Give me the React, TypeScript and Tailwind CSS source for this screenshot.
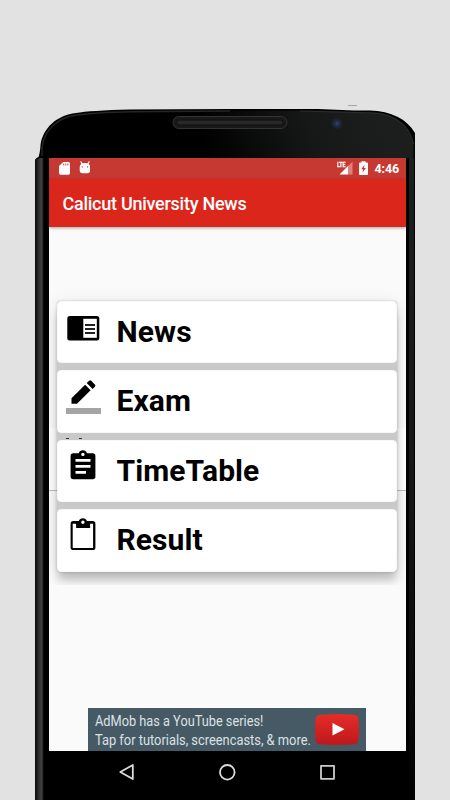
import type { ReactNode } from "react";

interface MenuItem {
    label: string;
    icon: ReactNode;
}

const menuItems: MenuItem[] = [
    {
        label: "News",
        icon: (
            <svg className="h-[62px] w-11" viewBox="0 0 44 62">
                <rect x="10.300" y="15" width="32" height="24.500" rx="2.500" fill="#000" />
                <rect x="26.300" y="17.800" width="13.500" height="19" fill="#fff" />
                <path d="M28 24h10M28 28h10M28 32h10" stroke="#222" strokeWidth="1.800" />
            </svg>
        ),
    },
    {
        label: "Exam",
        icon: (
            <svg className="h-[62px] w-11" viewBox="0 0 44 62">
                <path d="M14.500 33.700v-5.500L28.100 14.700l5.500 5.500L20 33.700Z" />
                <path d="m29.700 13.100 2.200-2.200c.9-.9 1.500-.9 2.300-.1l3.600 3.600c.8.8.8 1.500 0 2.300L35.600 19Z" />
                <path d="M9 38h35v6H9Z" fill="#a5a5a5" />
            </svg>
        ),
    },
    {
        label: "TimeTable",
        icon: (
            <svg className="h-[62px] w-11" viewBox="-0.5 0 44 62">
                <path
                    fillRule="evenodd"
                    d="M15.800 13.200h5.500a4.300 4.300 0 0 1 8.100 0h5.800a2.700 2.700 0 0 1 2.700 2.700v20.700a2.700 2.700 0 0 1-2.700 2.700H15.800a2.700 2.700 0 0 1-2.700-2.700V15.900a2.700 2.700 0 0 1 2.700-2.700Zm9.600-.5a1.700 1.700 0 1 0 0 3.400 1.700 1.700 0 0 0 0-3.400ZM18 19v2.800h15V19Zm0 6v2.800h15V25Zm0 6v2.800h10.500V31Z"
                />
            </svg>
        ),
    },
    {
        label: "Result",
        icon: (
            <svg className="h-[62px] w-11" viewBox="-0.5 -0.3 44 62">
                <path
                    fillRule="evenodd"
                    d="M15.800 11.800h5.500a4.300 4.300 0 0 1 8.100 0h5.800a2.700 2.700 0 0 1 2.700 2.700v23.600a2.700 2.700 0 0 1-2.700 2.700H15.800a2.700 2.700 0 0 1-2.700-2.700V14.500a2.700 2.700 0 0 1 2.700-2.700Zm9.600-.6a1.700 1.700 0 1 0 0 3.400 1.700 1.700 0 0 0 0-3.400Zm-10.200 3.200v24.300h20.400V14.400h-3v4.300H18.600v-4.300Z"
                />
            </svg>
        ),
    },
];

function PhoneBody() {
    return (
        <svg className="absolute inset-0" width="450" height="800" viewBox="0 0 450 800">
            <defs>
                <linearGradient id="left-edge" x1="35" x2="49" y1="0" y2="0" gradientUnits="userSpaceOnUse">
                    <stop offset="0" stopColor="#050505" />
                    <stop offset=".12" stopColor="#181818" />
                    <stop offset=".3" stopColor="#333" />
                    <stop offset=".5" stopColor="#424242" />
                    <stop offset=".57" stopColor="#161616" />
                    <stop offset=".64" stopColor="#000" />
                </linearGradient>
                <linearGradient id="glass" x1="210" x2="380" y1="170" y2="120" gradientUnits="userSpaceOnUse">
                    <stop offset="0" stopColor="#000" />
                    <stop offset=".6" stopColor="#161717" />
                    <stop offset="1" stopColor="#1c1e1e" />
                </linearGradient>
                <linearGradient id="right-edge" x1="0" x2="0" y1="158" y2="790" gradientUnits="userSpaceOnUse">
                    <stop offset="0" stopColor="#1d1e1e" />
                    <stop offset=".5" stopColor="#171717" />
                    <stop offset=".9" stopColor="#080808" />
                    <stop offset="1" stopColor="#000" />
                </linearGradient>
                <radialGradient id="lens">
                    <stop offset="0" stopColor="#34456f" />
                    <stop offset=".45" stopColor="#222b48" />
                    <stop offset="1" stopColor="#1c1e22" />
                </radialGradient>
            </defs>
            <path
                d="M35 800V160.500Q35 158.500 38.500 157Q40 153 40.500 145C43 128 57 115 76 113Q90 110.500 130 109.500L230 109H318L354 110.500H370C391 111 407 119 415 133V800Z"
                fill="#000"
            />
            <path
                d="M49 158V140L70 116Q90 112 130 111L315 110.500L375 112.500C395 113.500 411 125 413.500 145V158Z"
                fill="url(#glass)"
            />
            <path
                d="M42 156V148C44 130 58 117 77 115Q94 112.500 132 111.700L230 111"
                fill="none"
                stroke="#252525"
                strokeWidth="1.500"
            />
            <path
                d="M300 111L372 113C395 114 410 126 413.500 144"
                fill="none"
                stroke="#303232"
                strokeWidth=".8"
            />
            <path d="M35 160L39 158H49V800H44Q43 796 43 784L35 770Z" fill="url(#left-edge)" />
            <path d="M36 760V800H44Q43 793 43 784V760Z" fill="url(#left-edge)" />
            <path d="M35.500 160V800" stroke="#111" />
            <path d="M409 158h5v632h-5Z" fill="url(#right-edge)" />
            <path d="M348 105.500h9" stroke="#a5a5a5" />
            <rect x="173" y="116.500" width="114" height="12" rx="6" fill="#191919" stroke="#333" />
            <rect x="177" y="120" width="106" height="5" rx="2.500" fill="#282828" stroke="#101010" />
            <circle cx="337" cy="123.500" r="5.500" fill="url(#lens)" />
        </svg>
    );
}

function StatusBar() {
    return (
        <div className="flex h-[21px] shrink-0 items-center justify-between bg-[#c63932] pr-[7px] pl-[9px] text-white">
            <svg width="32" height="21" viewBox="0 0 32 21" fill="#fff">
                <path
                    fillRule="evenodd"
                    d="M5.200 4H10.300q1.700 0 1.700 1.700v9.300q0 1.700-1.700 1.700H2.700Q1 16.700 1 15V7.900ZM5.300 5.400v2.200h.9V5.400Zm2.100 0v2.200h.9V5.400Zm2 0v2.200h.9V5.400Z"
                />
                <path
                    fillRule="evenodd"
                    d="m22.900 3 1.600 2.200q2.600-.5 5 0l1.500-2.200.7.500-1 2.500q1.600 1.200 1.600 3v3q0 3.200-3 3.200h-4.600q-3 0-3-3.200V9q0-1.800 1.600-3L22.200 3.500Zm1.400 5.200a.7.700 0 1 0 0 1.400.7.700 0 0 0 0-1.400Zm5.200 0a.7.700 0 1 0 0 1.400.7.700 0 0 0 0-1.400Z"
                />
            </svg>
            <div className="flex items-center">
                <svg width="37" height="21" viewBox="0 0 37 21">
                    <path d="M10.500 8.500 15.500 3.800v12.700h-5Z" fill="#df817c" />
                    <path d="M2.500 16.500 11 8v8.500Z" fill="#fff" />
                    <text x="0" y="8.500" fill="#fff" stroke="#fff" strokeWidth=".3" fontFamily="Roboto, sans-serif" fontSize="7" fontWeight="700" textLength="8.500" lengthAdjust="spacingAndGlyphs">
                        LTE
                    </text>
                    <path d="M24.500 4.500V3.300h4v1.200h1.800q.7 0 .7.700v11q0 .7-.7.700h-7.500q-.7 0-.7-.7v-11q0-.7.700-.7Z" fill="#fff" />
                    <path d="m27.600 6.800-3.400 4.500h2l-.8 3.500 3.500-4.700h-2Z" fill="#c63932" />
                </svg>
                <span className="w-[25px] text-[12.500px] leading-[21px] font-bold tracking-[-0.100px] whitespace-nowrap">4:46</span>
            </div>
        </div>
    );
}

function MenuCard({ label, icon }: MenuItem) {
    return (
        <div className="flex h-[62.500px] rounded-[4px] bg-white shadow-[inset_0_0_1px_rgba(0,0,0,0.3)]">
            {icon}
            <span className="ml-[15.500px] text-[30px] leading-[62px] font-bold tracking-[0.080px] text-black">{label}</span>
        </div>
    );
}

function AdBanner() {
    return (
        <div className="ml-[39px] flex h-[43px] w-[277.500px] items-start justify-between bg-[#465a65] pt-[4px] pr-[6.500px] pl-[7px]">
            <div className="w-[216px] text-[15px] leading-[18.500px] whitespace-nowrap text-[#dce1e4]">
                <p className="w-max origin-left scale-x-[0.851]">AdMob has a YouTube series!</p>
                <p className="w-max origin-left scale-x-[0.857]">Tap for tutorials, screencasts, &amp; more.</p>
            </div>
            <svg className="mt-[2px]" width="44" height="31" viewBox="0 0 44 31">
                <defs>
                    <linearGradient id="play-badge" x1="0" x2="0" y1="0" y2="1">
                        <stop offset="0" stopColor="#e52d27" />
                        <stop offset="1" stopColor="#bf171d" />
                    </linearGradient>
                </defs>
                <path
                    d="M5 .8Q22-.7 39 .8Q43 1 43.400 5Q44.500 15.500 43.400 26Q43 30 39 30.300Q22 31.500 5 30.300Q1 30 .6 26Q-.5 15.500.6 5Q1 1 5 .8Z"
                    fill="url(#play-badge)"
                />
                <path d="M17.500 9v12.500L29.500 15.300Z" fill="#fff" />
            </svg>
        </div>
    );
}

function NavigationBar() {
    return (
        <div className="flex h-[49px] items-start justify-between bg-black pt-[12px] pr-[70px] pl-[69px]">
            <svg width="17" height="18" viewBox="0 0 17 18" fill="none" stroke="#ddd" strokeWidth="1.800" strokeLinejoin="round">
                <path d="M14.800 2v14L2.300 9Z" />
            </svg>
            <svg width="18" height="18" viewBox="0 0 18 18" fill="none" stroke="#ddd" strokeWidth="1.800">
                <circle cx="9.300" cy="9.300" r="7.300" />
            </svg>
            <svg width="17" height="18" viewBox="0 0 17 18" fill="none" stroke="#ccc" strokeWidth="1.800" strokeLinejoin="round">
                <rect x="2" y="2.800" width="13" height="13" />
            </svg>
        </div>
    );
}

export default function App() {
    return (
        <div className="relative h-[800px] w-[450px] overflow-hidden bg-[#e2e2e2] pt-[158px] font-['Roboto',sans-serif]">
            <PhoneBody />
            <main className="relative ml-[49px] flex h-[642px] w-[357.400px] flex-col">
                <StatusBar />
                <header className="z-10 flex h-[47.500px] shrink-0 items-center bg-[#db261c] pl-[13.500px] text-[18px] font-medium text-white shadow-[0_1px_3px_rgba(0,0,0,0.35)]">
                    <h1 className="pt-px tracking-[-0.260px]">Calicut University News</h1>
                </header>
                <section className="flex h-[524.500px] flex-col justify-between bg-[#fafafa]">
                    <div className="relative h-[358px] overflow-hidden pt-[74px] pr-[9px] pl-[8px]">
                        {/* row left over behind the menu */}
                        <div className="absolute top-[201px] left-0 h-[63px] w-full border-b border-[#bbb] bg-white" />
                        <div className="relative flex flex-col gap-[7px] rounded-[4px] bg-[#c9c9c9] shadow-[0_0_3px_rgba(0,0,0,0.18),0_9px_8px_-1px_rgba(0,0,0,0.2),0_4px_20px_rgba(0,0,0,0.1)]">
                            {menuItems.map((item) => (
                                <MenuCard key={item.label} {...item} />
                            ))}
                            <div className="absolute top-[137px] left-[9px] flex h-[1.500px] w-[17px] justify-between">
                                <span className="w-[3px] bg-[#333]" />
                                <span className="mr-[1px] w-[3px] bg-[#333]" />
                            </div>
                        </div>
                    </div>
                    <AdBanner />
                </section>
                <NavigationBar />
            </main>
        </div>
    );
}
